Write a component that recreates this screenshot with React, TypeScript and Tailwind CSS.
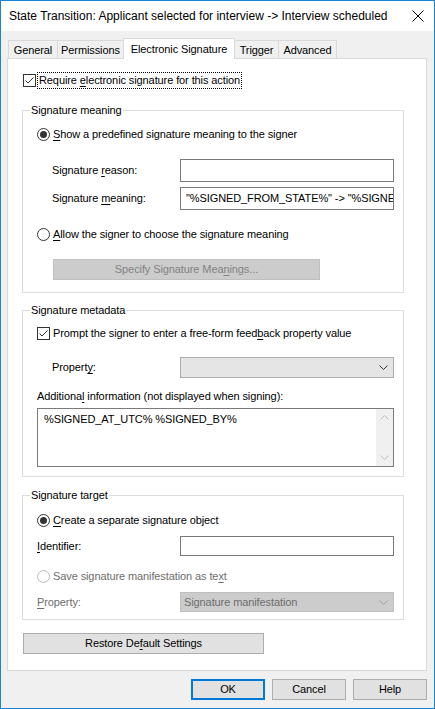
import React from 'react';

const font = "font-['Liberation_Sans',Arial,sans-serif] text-[11px] tracking-[-0.1px] text-black";

const CheckBox = () => (
  <span className="w-[13px] h-[13px] border border-[#333333] bg-white flex items-center justify-center shrink-0">
    <svg width="11" height="11" viewBox="0 0 11 11">
      <path d="M1.5 5.5 L4 8 L9.5 2.5" fill="none" stroke="#333333" strokeWidth="1" />
    </svg>
  </span>
);

const Radio = ({ checked = false, disabled = false }: { checked?: boolean; disabled?: boolean }) => (
  <span
    className={
      disabled
        ? 'w-[13px] h-[13px] rounded-full border border-[#bcbcbc] bg-white flex items-center justify-center shrink-0'
        : 'w-[13px] h-[13px] rounded-full border border-[#333333] bg-white flex items-center justify-center shrink-0'
    }
  >
    {checked && <span className="w-[7px] h-[7px] rounded-full bg-[#333333]" />}
  </span>
);

const Chevron = ({ color = '#333333' }: { color?: string }) => (
  <svg width="9" height="5" viewBox="0 0 9 5">
    <path d="M0.5 0.5 L4.5 4.5 L8.5 0.5" fill="none" stroke={color} strokeWidth="1" />
  </svg>
);

const U = ({ children }: { children: React.ReactNode }) => (
  <span className="underline decoration-1 underline-offset-[2px]">{children}</span>
);

interface GroupProps {
  title: string;
  className?: string;
  children: React.ReactNode;
}

const Group: React.FC<GroupProps> = ({ title, className = '', children }) => (
  <fieldset className={`border border-[#dcdcdc] ml-[14px] w-[382px] ${className}`}>
    <legend className="ml-[7px] px-[1px] leading-[15px]">{title}</legend>
    <div className="flex flex-col pl-[14px] pr-[9px]">{children}</div>
  </fieldset>
);

const tabs = [
  { label: 'General', w: 'w-[50px]' },
  { label: 'Permissions', w: 'w-[67px]' },
  { label: 'Electronic Signature', w: 'w-[112px]', active: true },
  { label: 'Trigger', w: 'w-[45px]' },
  { label: 'Advanced', w: 'w-[59px]' },
];

export default function App() {
  return (
    <div className={`w-[435px] h-[709px] border border-[#1883d7] bg-[#f0f0f0] flex flex-col ${font}`}>
      {/* title bar */}
      <div className="h-[30px] bg-white flex items-center justify-between pl-[8px] pr-[10px] shrink-0">
        <span className="text-[12px] tracking-normal">
          State Transition: Applicant selected for interview -&gt; Interview scheduled
        </span>
        <svg width="12" height="12" viewBox="0 0 12 12">
          <path d="M0.5 0.5 L11.5 11.5 M11.5 0.5 L0.5 11.5" stroke="#000" strokeWidth="1" />
        </svg>
      </div>

      <div className="flex-1 flex flex-col pl-[6px] pr-[7px] pt-[9px]">
        {/* tabs */}
        <div className="flex items-end h-[18px] pl-px relative z-10">
          {tabs.map((t, i) =>
            t.active ? (
              <div
                key={t.label}
                className={`${t.w} h-[21px] -mb-px -ml-px bg-white border-t border-x border-[#d9d9d9] flex items-center justify-center`}
              >
                {t.label}
              </div>
            ) : (
              <div
                key={t.label}
                className={`${t.w} h-[18px] ${i > 0 ? '-ml-px' : ''} bg-[#f0f0f0] border-t border-x border-[#d9d9d9] flex items-center justify-center pt-[1px]`}
              >
                {t.label}
              </div>
            )
          )}
        </div>

        {/* tab panel */}
        <div className="flex-1 bg-white border border-[#d9d9d9] flex flex-col pt-[13px]">
          <div className="flex items-center h-[17px] pl-[15px]">
            <CheckBox />
            <span className="ml-[1px] h-[17px] border border-dotted border-black px-[1px] flex items-center">
              <span>
                Require <U>e</U>lectronic signature for this action
              </span>
            </span>
          </div>

          <Group title="Signature meaning" className="mt-[14px] pb-[12px]">
            <div className="flex items-center h-[15px] mt-[9px]">
              <Radio checked />
              <span className="ml-[3px]">
                <U>S</U>how a predefined signature meaning to the signer
              </span>
            </div>
            <div className="flex items-center mt-[17px]">
              <span className="pl-[15px]">
                Signature <U>r</U>eason:
              </span>
              <div className="ml-auto w-[214px] h-[23px] border border-[#7a7a7a] bg-white" />
            </div>
            <div className="flex items-center mt-[5px]">
              <span className="pl-[15px]">
                Signature <U>m</U>eaning:
              </span>
              <div className="ml-auto w-[214px] h-[23px] border border-[#7a7a7a] bg-white overflow-hidden whitespace-nowrap flex items-center pl-[5px]">
                "%SIGNED_FROM_STATE%" -&gt; "%SIGNED_TO_STATE%"
              </div>
            </div>
            <div className="flex items-center h-[15px] mt-[17px]">
              <Radio />
              <span className="ml-[3px]">
                <U>A</U>llow the signer to choose the signature meaning
              </span>
            </div>
            <div className="mt-[17px] ml-[16px] w-[267px] h-[21px] bg-[#cccccc] border border-[#bfbfbf] text-[#838383] flex items-center justify-center">
              <span>
                Specify Signature Mea<U>n</U>ings...
              </span>
            </div>
          </Group>

          <Group title="Signature metadata" className="mt-[10px] pb-[9px]">
            <div className="flex items-center h-[15px] mt-[8px]">
              <CheckBox />
              <span className="ml-[3px]">
                Prompt the signer to enter a free-form feed<U>b</U>ack property value
              </span>
            </div>
            <div className="flex items-center mt-[16px]">
              <span className="pl-[15px]">
                Propert<U>y</U>:
              </span>
              <div className="ml-auto w-[214px] h-[21px] border border-[#adadad] bg-[#e5e5e5] flex items-center justify-end pr-[5px]">
                <Chevron />
              </div>
            </div>
            <div className="flex items-center h-[15px] mt-[11px]">
              <span>
                Additiona<U>l</U> information (not displayed when signing):
              </span>
            </div>
            <div className="mt-[4px] h-[59px] border border-[#7a7a7a] bg-white flex">
              <div className="flex-1 pl-[6px] pt-[4px] leading-[13px]">%SIGNED_AT_UTC% %SIGNED_BY%</div>
              <div className="w-[17px] bg-[#f0f0f0] flex flex-col items-center justify-between py-[6px]">
                <svg width="9" height="5" viewBox="0 0 9 5">
                  <path d="M0.5 4.5 L4.5 0.5 L8.5 4.5" fill="none" stroke="#c0c0c0" strokeWidth="1" />
                </svg>
                <Chevron color="#c0c0c0" />
              </div>
            </div>
          </Group>

          <Group title="Signature target" className="mt-[11px] pb-[7px]">
            <div className="flex items-center h-[15px] mt-[10px]">
              <Radio checked />
              <span className="ml-[3px]">
                <U>C</U>reate a separate signature object
              </span>
            </div>
            <div className="flex items-center mt-[8px]">
              <span>
                <U>I</U>dentifier:
              </span>
              <div className="ml-auto w-[214px] h-[20px] border border-[#7a7a7a] bg-white" />
            </div>
            <div className="flex items-center h-[15px] mt-[13px] text-[#6d6d6d]">
              <Radio disabled />
              <span className="ml-[3px]">
                Save signature manifestation as te<U>x</U>t
              </span>
            </div>
            <div className="flex items-center mt-[8px] text-[#6d6d6d]">
              <span>
                <U>P</U>roperty:
              </span>
              <div className="ml-auto w-[214px] h-[20px] border border-[#bfbfbf] bg-[#cccccc] flex items-center justify-between pl-[3px] pr-[5px]">
                <span>Signature manifestation</span>
                <Chevron color="#a0a0a0" />
              </div>
            </div>
          </Group>

          <div className="mt-[13px] ml-[15px] w-[241px] h-[21px] bg-[#e1e1e1] border border-[#adadad] flex items-center justify-center">
            <span>
              Restore De<U>f</U>ault Settings
            </span>
          </div>
        </div>

        {/* dialog buttons */}
        <div className="flex justify-end gap-[7px] mt-[8px] mb-[8px]">
          <button className="w-[74px] h-[21px] bg-[#e1e1e1] border-2 border-[#0078d7] flex items-center justify-center">
            OK
          </button>
          <button className="w-[74px] h-[21px] bg-[#e1e1e1] border border-[#adadad] flex items-center justify-center">
            Cancel
          </button>
          <button className="w-[74px] h-[21px] bg-[#e1e1e1] border border-[#adadad] flex items-center justify-center">
            Help
          </button>
        </div>
      </div>
    </div>
  );
}
